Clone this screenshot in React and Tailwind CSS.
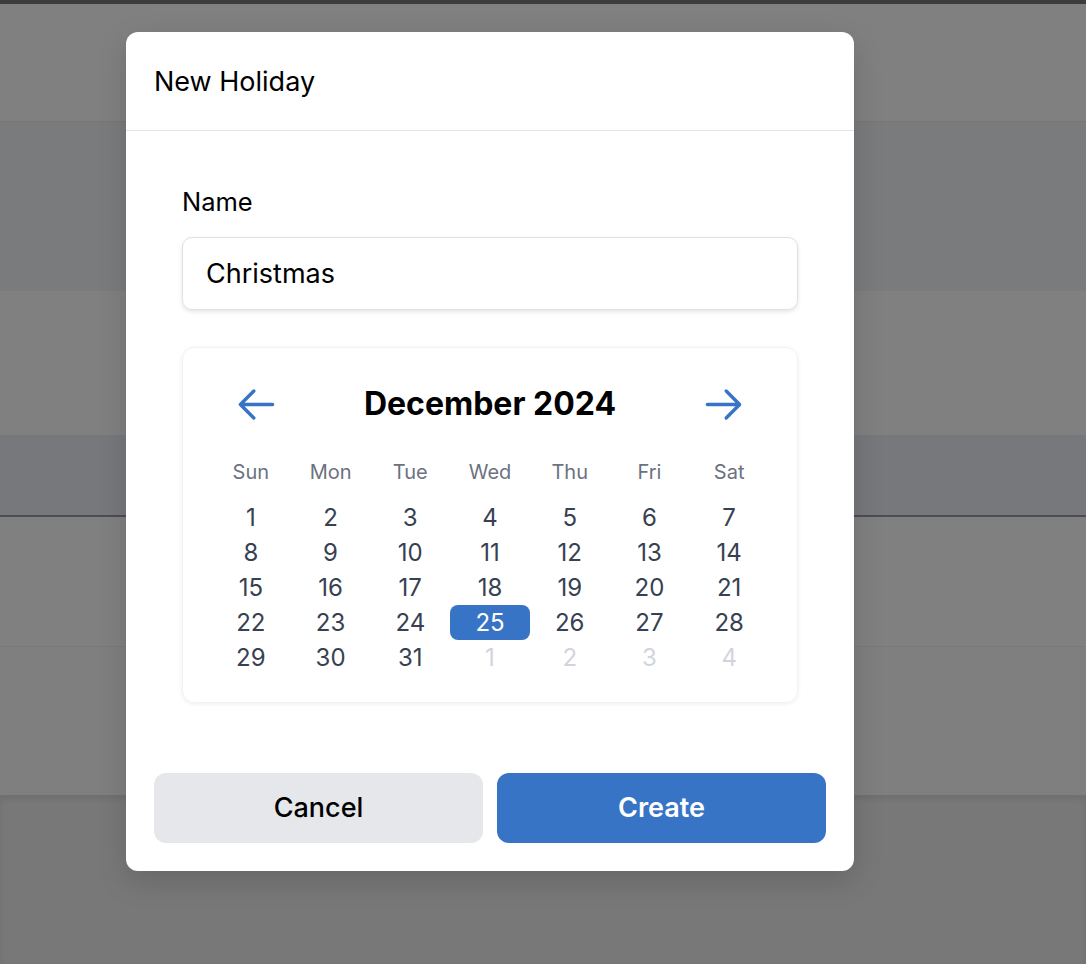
import { useState } from "react";

const blue = "bg-[#3874c5]";

function Arrow({ dir }) {
  const d = dir === "left"
    ? "M10.5 19.5 3 12m0 0 7.5-7.5M3 12h18"
    : "M13.5 4.5 21 12m0 0-7.5 7.5M21 12H3";
  return (
    <button className="flex items-center justify-center text-[#3874c5]">
      <svg width="43" height="43" viewBox="0 0 24 24" fill="none" stroke="currentColor" strokeWidth="1.9" strokeLinecap="round" strokeLinejoin="round">
        <path d={d} />
      </svg>
    </button>
  );
}

export default function App() {
  const [name, setName] = useState("Christmas");
  const [selected, setSelected] = useState(25);

  const weekdays = ["Sun", "Mon", "Tue", "Wed", "Thu", "Fri", "Sat"];
  // december 2024 starts on sunday, padded with january days
  const days = [];
  for (let i = 1; i <= 31; i++) days.push({ n: i, cur: true });
  for (let i = 1; i <= 4; i++) days.push({ n: i, cur: false });

  return (
    <div className="relative h-[964px] w-full overflow-hidden bg-[#808080] font-['Inter',sans-serif]">
      {/* page behind the overlay */}
      <div className="flex h-full flex-col">
        <div className="h-[4px] bg-[#3c3c3c]" />
        <div className="h-[118px] border-b border-[#767676] bg-[#808080]" />
        <div className="h-[169px] bg-[#7a7b7c]" />
        <div className="h-[144px] bg-[#808080]" />
        <div className="h-[82px] border-b-2 border-[#4b4d56] bg-[#76787c]" />
        <div className="h-[130px] border-b border-[#7a7a7a] bg-[#808080]" />
        <div className="h-[148px] bg-[#7f7f7f]" />
        <div className="flex-1 bg-[#787878] shadow-[inset_0_4px_6px_rgba(0,0,0,0.08)]" />
      </div>

      {/* modal */}
      <div className="absolute left-[126px] top-[32px] w-[728px] rounded-[12px] bg-white shadow-[0_10px_30px_rgba(0,0,0,0.15)]">
        <div className="flex h-[99px] items-center border-b border-[#e4e4e4] px-[28px] pt-[2px] text-[27px] text-black">
          New Holiday
        </div>

        <div className="px-[56px] pt-[55px]">
          <label className="block text-[25.5px] leading-[32px] text-black">Name</label>
          <input
            value={name}
            onChange={(e) => setName(e.target.value)}
            className="mt-[19px] h-[73px] w-full rounded-[10px] border border-[#e0e0e0] px-[23px] text-[27px] text-black shadow-[0_2px_4px_rgba(0,0,0,0.1)] outline-none"
          />

          <div className="mt-[37px] rounded-[12px] border border-[#f2f2f2] px-[28px] pb-[27px] pt-[28px] shadow-[0_1px_4px_rgba(0,0,0,0.07)]">
            <div className="flex h-[56px] items-center justify-between px-[24px]">
              <Arrow dir="left" />
              <div className="text-[32px] font-bold text-black">December 2024</div>
              <Arrow dir="right" />
            </div>

            <div className="mt-[26px] grid grid-cols-7 text-center text-[20px] leading-[28px] text-[#6b7280]">
              {weekdays.map((w) => (
                <div key={w}>{w}</div>
              ))}
            </div>

            <div className="mt-[14px] grid grid-cols-7 text-center text-[24px]">
              {days.map((d, i) => (
                <div
                  key={i}
                  onClick={() => d.cur && setSelected(d.n)}
                  className={
                    "flex h-[35px] items-center justify-center rounded-[8px] " +
                    (d.cur && d.n === selected
                      ? blue + " text-white"
                      : d.cur
                      ? "text-[#374151]"
                      : "text-[#d1d5db]")
                  }
                >
                  {d.n}
                </div>
              ))}
            </div>
          </div>
        </div>

        <div className="mt-[70px] flex gap-[14px] px-[28px] pb-[28px]">
          <button className="h-[70px] flex-1 rounded-[12px] bg-[#e5e7eb] text-[27px] font-medium text-black">
            Cancel
          </button>
          <button className={"h-[70px] flex-1 rounded-[12px] text-[27px] font-semibold text-white " + blue}>
            Create
          </button>
        </div>
      </div>
    </div>
  );
}
